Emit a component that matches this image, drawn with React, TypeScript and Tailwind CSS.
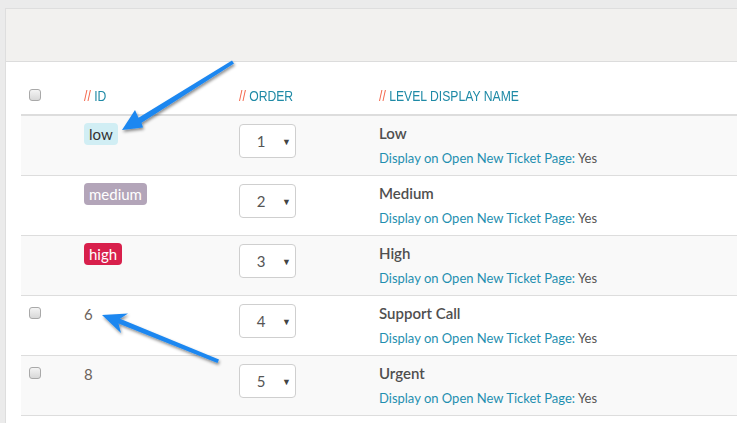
import React from "react";

const body = { fontFamily: "Lato, 'Open Sans', sans-serif" };
const head = { fontFamily: "'Liberation Sans', Arial, sans-serif" };

function Checkbox() {
  return (
    <span className="block w-[12px] h-[12px] rounded-[3px] border border-[#a9a9a9] bg-gradient-to-b from-[#f4f4f4] to-[#d8d8d8]" />
  );
}

function Select({ n }: { n: number }) {
  return (
    <div className="w-[57px] h-[34px] rounded-[4px] border border-[#cfcfcf] bg-white flex items-center">
      <span className="w-[42px] text-center text-[15px] text-[#555]" style={body}>{n}</span>
      <span className="text-[9px] text-[#444] leading-none">▼</span>
    </div>
  );
}

function Head({ label }: { label: string }) {
  return (
    <span className="inline-block origin-left scale-x-[0.84] whitespace-nowrap text-[14.5px] text-[#1f8aa6]" style={head}>
      <span className="text-[#f4664b]">//</span> {label}
    </span>
  );
}

type Row = {
  check: boolean;
  id: React.ReactNode;
  order: number;
  name: string;
  striped: boolean;
};

const rows: Row[] = [
  {
    check: false,
    id: <span className="inline-block rounded-[4px] bg-[#d1eef4] text-[#333] px-[5px] h-[22px] leading-[22px] text-[15px]">low</span>,
    order: 1,
    name: "Low",
    striped: true,
  },
  {
    check: false,
    id: <span className="inline-block rounded-[4px] bg-[#b3a5b9] text-white px-[5px] h-[22px] leading-[22px] text-[15px]">medium</span>,
    order: 2,
    name: "Medium",
    striped: false,
  },
  {
    check: false,
    id: <span className="inline-block rounded-[4px] bg-[#d8204c] text-white px-[5px] h-[22px] leading-[22px] text-[15px]">high</span>,
    order: 3,
    name: "High",
    striped: true,
  },
  { check: true, id: <span className="inline-block text-[15px] text-[#6b625c]">6</span>, order: 4, name: "Support Call", striped: false },
  { check: true, id: <span className="inline-block text-[15px] text-[#6b625c]">8</span>, order: 5, name: "Urgent", striped: true },
];

export default function App() {
  return (
    <div className="relative w-[737px] h-[423px] overflow-hidden bg-[#ebebeb]" style={body}>
      <div className="ml-[5px] mt-[8px] h-[415px] border-l border-t border-[#dedede] bg-white flex flex-col">
        <div className="h-[53px] shrink-0 bg-[#f2f1ef] border-b border-[#dcdcdc]" />
        <div className="pl-[15px] flex flex-col">
          {/* header row */}
          <div className="h-[54px] flex items-end border-b-2 border-[#dddddd]">
            <div className="w-[63px] pl-[8px] pb-[13px]"><Checkbox /></div>
            <div className="w-[155px] pb-[6px]"><Head label="ID" /></div>
            <div className="w-[140px] pb-[6px]"><Head label="ORDER" /></div>
            <div className="pb-[6px]"><Head label="LEVEL DISPLAY NAME" /></div>
          </div>
          {rows.map((r) => (
            <div
              key={r.order}
              className={`h-[60px] flex border-b border-[#dddddd] ${r.striped ? "bg-[#f9f9f9]" : "bg-white"}`}
            >
              <div className="w-[63px] pl-[8px] pt-[11px]">{r.check ? <Checkbox /> : null}</div>
              <div className="w-[155px] pt-[6px]">{r.id}</div>
              <div className="w-[140px] pt-[8px]"><Select n={r.order} /></div>
              <div className="pt-[7px] flex flex-col">
                <span className="text-[15px] font-semibold text-[#4f4f4f] leading-[20px]">{r.name}</span>
                <span className="mt-[6px] text-[13px] text-[#1f8fb0] leading-[18px]">
                  Display on Open New Ticket Page: <span className="text-[#555]">Yes</span>
                </span>
              </div>
            </div>
          ))}
        </div>
      </div>
      <svg className="absolute left-0 top-0 pointer-events-none" width="737" height="423">
        <defs>
          <filter id="sh" x="-20%" y="-20%" width="140%" height="140%">
            <feDropShadow dx="1" dy="2" stdDeviation="1.6" floodColor="#000" floodOpacity="0.45" />
          </filter>
        </defs>
        <polygon
          filter="url(#sh)"
          fill="#1d87f0"
          points="122,130 143,127.5 141.5,122.8 234,63.5 232,60.5 138.5,117.8 135,110"
        />
        <polygon
          filter="url(#sh)"
          fill="#1d87f0"
          points="102,315 121,333 118.5,323.5 217.5,363 219,359.5 120,318.8 128,313.5"
        />
      </svg>
    </div>
  );
}
